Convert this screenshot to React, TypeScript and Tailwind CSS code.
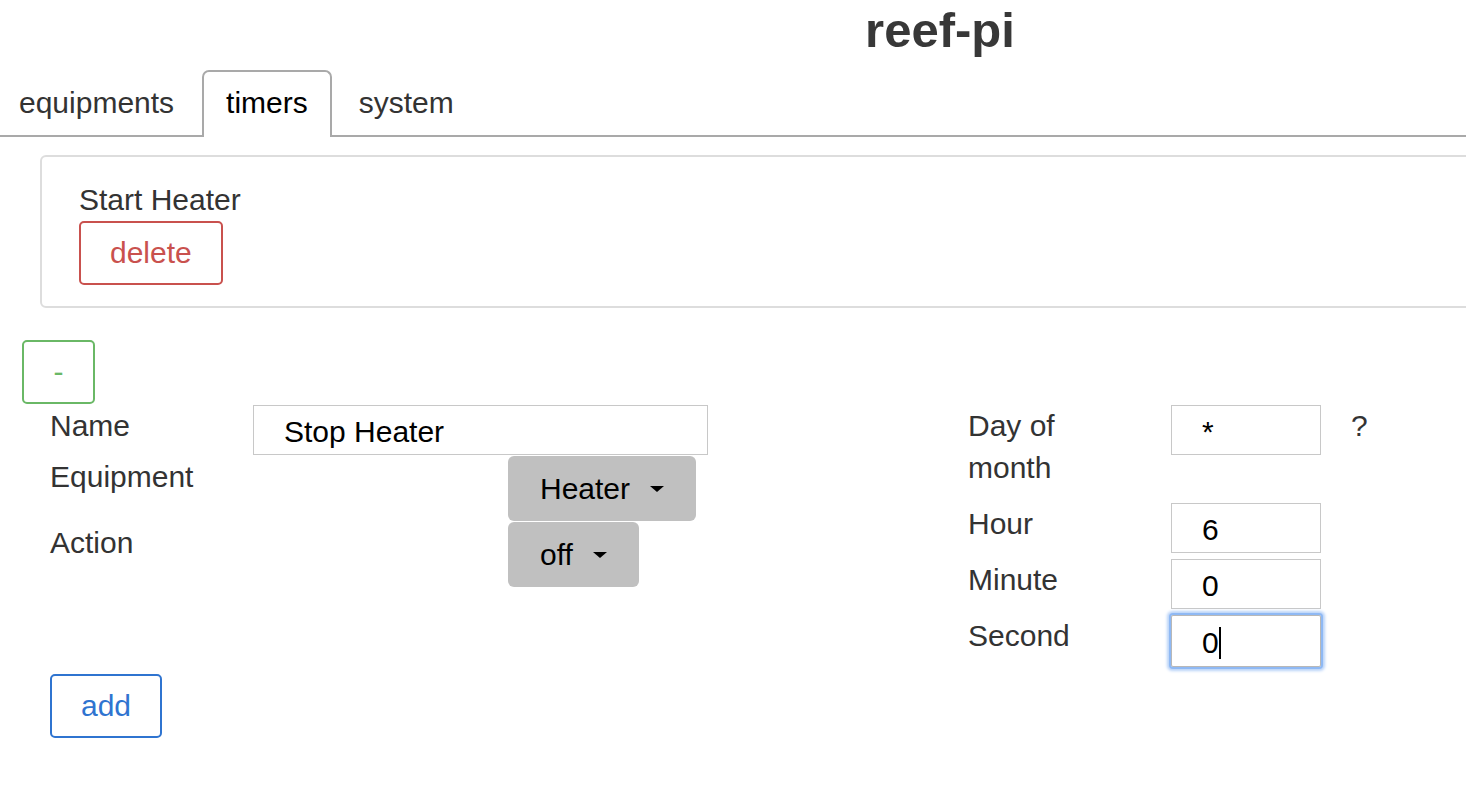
import React from "react";

const font = "font-['Liberation_Sans',Arial,sans-serif]";

//left-hand form row: label column + value
function Row({ label, h, children }: { label: string; h: string; children: React.ReactNode }) {
  return (
    <div className={`flex ${h}`}>
      <div className="w-[203px] shrink-0 pr-[30px]">{label}</div>
      <div className="flex-1">{children}</div>
    </div>
  );
}

//plain text box
function Field({ value, w }: { value: string; w: string }) {
  return (
    <input
      readOnly
      value={value}
      className={`${w} h-[50px] border border-[#c8c8c8] bg-white pl-[30px] pt-[4px] text-black outline-none`}
    />
  );
}

//grey dropdown button with caret
function Dropdown({ label }: { label: string }) {
  return (
    <button className="flex h-[65px] items-center rounded-[6px] bg-[#c0c0c0] pl-[32px] pr-[32px] text-black">
      <span>{label}</span>
      <span className="ml-[20px] h-0 w-0 border-x-[7px] border-t-[6px] border-x-transparent border-t-black" />
    </button>
  );
}

export default function App() {
  return (
    <div className={`w-screen overflow-hidden bg-white text-[30px] leading-[42px] text-[#333] ${font}`}>
      <div className="w-[1880px] pb-[60px]">
        {/* Title */}
        <h1 className="text-center text-[49px] font-bold leading-[60px] text-[#383838]">reef-pi</h1>

        {/* Tabs */}
        <div className="mt-[10px] flex border-b-2 border-[#a9a9a9]">
          <div className="pb-[11px] pl-[19px] pr-[28px] pt-[12px]">equipments</div>
          <div className="-mb-[2px] rounded-t-[7px] border-2 border-b-0 border-[#a9a9a9] bg-white px-[22px] pb-[11px] pt-[10px] text-black">
            timers
          </div>
          <div className="pb-[11px] pl-[27px] pt-[12px]">system</div>
        </div>

        {/* Existing timer */}
        <div className="mx-[40px] mt-[18px] rounded-[6px] border-2 border-[#dddddd] pb-[21px] pl-[37px] pt-[22px]">
          <div>Start Heater</div>
          <button className="h-[64px] rounded-[5px] border-2 border-[#c9514e] px-[29px] text-[#c9514e]">
            delete
          </button>
        </div>

        {/* Collapse toggle */}
        <button className="ml-[22px] mt-[32px] h-[64px] w-[73px] rounded-[5px] border-2 border-[#6ab866] text-[#6ab866]">
          -
        </button>

        {/* New timer form */}
        <div className="mt-[1px] flex pl-[50px]">
          <div className="w-[918px]">
            <Row label="Name" h="h-[51px]">
              <Field value="Stop Heater" w="w-[455px]" />
            </Row>
            <Row label="Equipment" h="h-[66px]">
              <div className="ml-[255px] flex">
                <Dropdown label="Heater" />
              </div>
            </Row>
            <Row label="Action" h="h-[66px]">
              <div className="ml-[255px] flex">
                <Dropdown label="off" />
              </div>
            </Row>
          </div>

          <div>
            <div className="flex h-[98px]">
              <div className="w-[203px] pr-[30px]">Day of month</div>
              <Field value="*" w="w-[150px]" />
              <div className="ml-[30px]">?</div>
            </div>
            <div className="flex h-[56px]">
              <div className="w-[203px]">Hour</div>
              <Field value="6" w="w-[150px]" />
            </div>
            <div className="flex h-[56px]">
              <div className="w-[203px]">Minute</div>
              <Field value="0" w="w-[150px]" />
            </div>
            <div className="flex h-[56px]">
              <div className="w-[203px]">Second</div>
              {/* focused box with caret */}
              <div className="flex h-[52px] w-[150px] items-center rounded-[2px] border border-[#b8b8b8] pl-[30px] pt-[4px] text-black shadow-[0_0_0_2px_#8fb9f4,0_0_3px_4px_#b9d3f8]">
                <span>0</span>
                <span className="h-[32px] w-[2px] bg-black" />
              </div>
            </div>
          </div>
        </div>

        <button className="ml-[50px] mt-[3px] h-[64px] rounded-[5px] border-2 border-[#2f74d0] px-[29px] text-[#2f74d0]">
          add
        </button>
      </div>
    </div>
  );
}
